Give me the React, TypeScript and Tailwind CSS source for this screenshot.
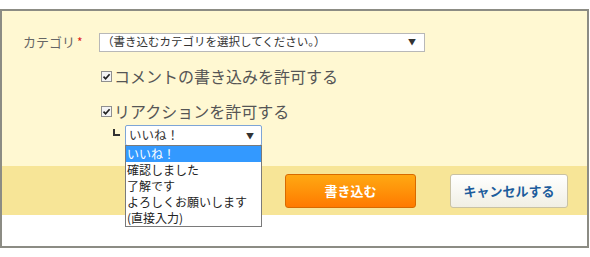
import React from "react";

const jp = { fontFamily: '"Noto Sans CJK JP", "Noto Sans", sans-serif' };

function Check() {
  return (
    <span className="inline-flex h-[11px] w-[11px] items-center justify-center border border-[#8f8f8f] bg-[#f4f4f4]">
      <svg width="9" height="9" viewBox="0 0 9 9">
        <path d="M1.5 4.6 L3.6 6.8 L7.6 2.2" fill="none" stroke="#222" strokeWidth="1.7" />
      </svg>
    </span>
  );
}

const options = ["いいね！", "確認しました", "了解です", "よろしくお願いします", "(直接入力)"];

export default function App() {
  return (
    <div className="h-[257px] w-[590px] bg-white pt-[9px]" style={jp}>
      <div className="flex h-[239px] w-[589px] flex-col border-2 border-[#8c8c84]">
        {/* form area */}
        <div className="h-[155px] bg-[#fff8d2] pl-[21px] pt-[21px]">
          <div className="flex h-[20px] items-center">
            <span className="w-[56px] whitespace-nowrap text-[13px] leading-[20px] text-[#666]">
              カテゴリ<span className="ml-[2px] text-[12px] text-[#e02020]">*</span>
            </span>
            <div className="ml-[20px] flex h-[19px] w-[326px] items-center justify-between border border-[#b8b8b8] bg-white pl-[2px] pr-[8px] text-[11.5px] leading-none text-[#333]">
              <span>（書き込むカテゴリを選択してください。）</span>
              <span className="text-[8px]">▼</span>
            </div>
          </div>

          <div className="ml-[78px] mt-[14px] flex h-[20px] items-center gap-[2px] text-[16px] leading-[20px] text-[#555]">
            <Check />
            <span>コメントの書き込みを許可する</span>
          </div>

          <div className="ml-[78px] mt-[15px] flex h-[20px] items-center gap-[2px] text-[16px] leading-[20px] text-[#555]">
            <Check />
            <span>リアクションを許可する</span>
          </div>

          <div className="ml-[90px] mt-[4px] flex items-start">
            <span className="mt-[4px] h-[7px] w-[7px] border-b-2 border-l-2 border-[#333]" />
            <div className="relative ml-[5px]">
              <div className="flex h-[21px] w-[137px] items-center justify-between rounded-[2px] border border-[#7ea5d6] bg-white pl-[3px] pr-[7px] text-[12.5px] leading-none text-[#333]">
                <span>いいね！</span>
                <span className="text-[8px]">▼</span>
              </div>
              <ul className="absolute left-0 top-[20px] z-10 w-[137px] border border-[#7a7a7a] bg-white text-[12px] text-[#222]">
                {options.map((o, i) => (
                  <li
                    key={o}
                    className={
                      i === 0
                        ? "h-[16px] bg-[#3399ff] pl-[1px] leading-[16px] text-white"
                        : "h-[16px] pl-[1px] leading-[16px]"
                    }
                  >
                    {o}
                  </li>
                ))}
              </ul>
            </div>
          </div>
        </div>

        {/* button band */}
        <div className="flex h-[49px] items-center bg-[#f7e597] pl-[283px]">
          <button className="flex h-[34px] w-[131px] items-center justify-center rounded-[3px] border border-[#d86a00] bg-gradient-to-b from-[#ffa812] to-[#ff7a00] text-[13px] font-bold text-white">
            書き込む
          </button>
          <button className="ml-[34px] flex h-[34px] w-[118px] items-center justify-center rounded-[3px] border border-[#c9c2a4] bg-gradient-to-b from-white to-[#f1efe4] text-[13px] font-bold text-[#1c5c9c]">
            キャンセルする
          </button>
        </div>

        <div className="flex-1 bg-white" />
      </div>
    </div>
  );
}
